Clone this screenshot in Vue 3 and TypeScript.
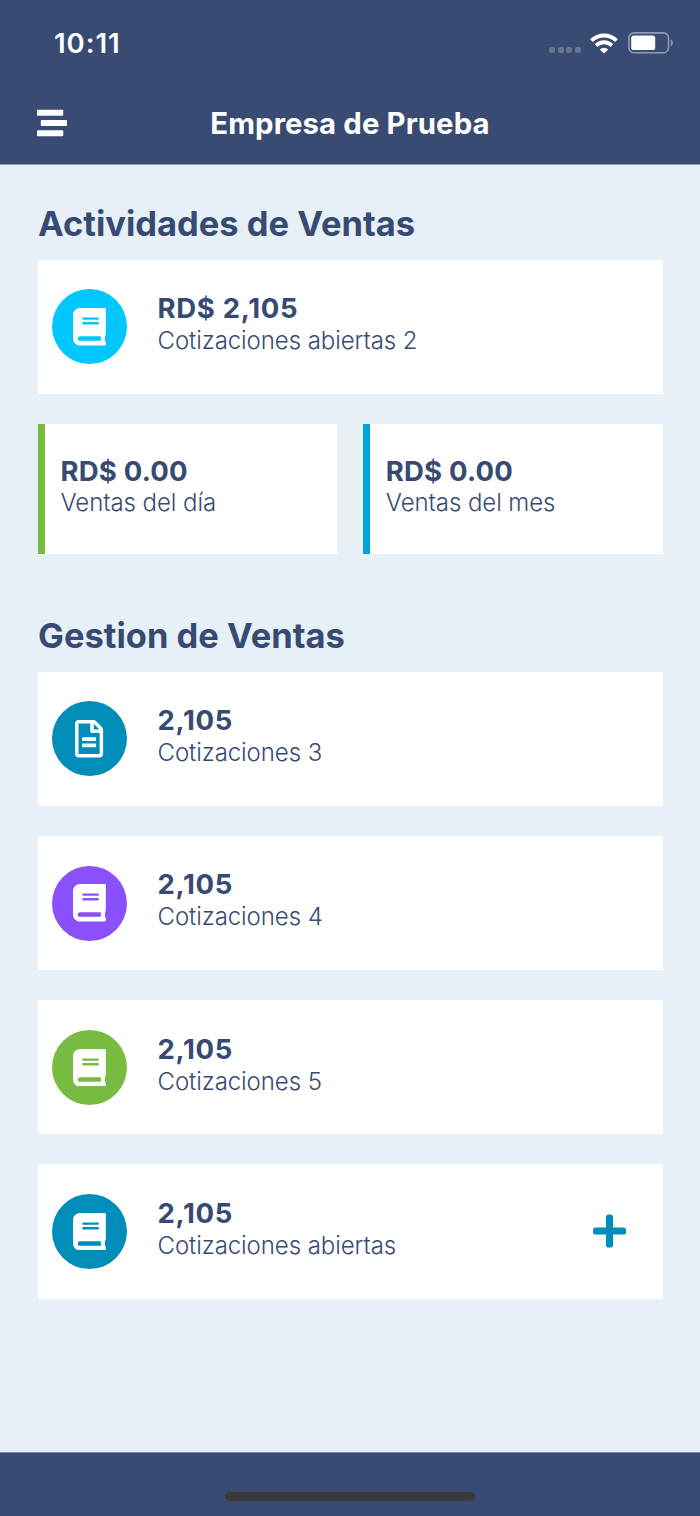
<script setup lang="ts">
type IconName = 'book' | 'file'

interface Entry {
  value: string
  label: string
  icon: IconName
  tone: string
  addable?: boolean
}

interface Stat {
  value: string
  label: string
  tone: string
}

const activities: Entry[] = [
  { value: 'RD$ 2,105', label: 'Cotizaciones abiertas 2', icon: 'book', tone: 'cyan' },
]

const stats: Stat[] = [
  { value: 'RD$ 0.00', label: 'Ventas del día', tone: 'green' },
  { value: 'RD$ 0.00', label: 'Ventas del mes', tone: 'blue' },
]

const management: Entry[] = [
  { value: '2,105', label: 'Cotizaciones 3', icon: 'file', tone: 'teal' },
  { value: '2,105', label: 'Cotizaciones 4', icon: 'book', tone: 'violet' },
  { value: '2,105', label: 'Cotizaciones 5', icon: 'book', tone: 'green' },
  { value: '2,105', label: 'Cotizaciones abiertas', icon: 'book', tone: 'teal', addable: true },
]

const sections = [
  { title: 'Actividades de Ventas', entries: activities, stats },
  { title: 'Gestion de Ventas', entries: management, stats: [] as Stat[] },
]

const icons: Record<IconName, { width: number; path: string }> = {
  book: {
    width: 448,
    path: 'M448 360V16c0-9-7-16-16-16H96C43 0 0 43 0 96v320c0 53 43 96 96 96h336c9 0 16-7 16-16v-24c0-7.500-3.500-14.300-8.900-18.700-4.200-15.400-4.200-59.300 0-74.700 5.400-4.300 8.900-11.100 8.900-18.600zM128 134c0-3.300 2.700-6 6-6h212c3.300 0 6 2.700 6 6v20c0 3.300-2.700 6-6 6H134c-3.300 0-6-2.700-6-6v-20zm0 64c0-3.300 2.700-6 6-6h212c3.300 0 6 2.700 6 6v20c0 3.300-2.700 6-6 6H134c-3.300 0-6-2.700-6-6v-20zm253.400 250H96c-17.700 0-32-14.300-32-32 0-17.600 14.400-32 32-32h285.400c-1.900 17.100-1.900 46.900 0 64z',
  },
  file: {
    width: 384,
    path: 'M288 248v28c0 6.600-5.400 12-12 12H108c-6.600 0-12-5.400-12-12v-28c0-6.600 5.400-12 12-12h168c6.600 0 12 5.400 12 12zm-12 72H108c-6.600 0-12 5.400-12 12v28c0 6.600 5.400 12 12 12h168c6.600 0 12-5.400 12-12v-28c0-6.600-5.400-12-12-12zm108-188.100V464c0 26.500-21.500 48-48 48H48c-26.500 0-48-21.500-48-48V48C0 21.500 21.500 0 48 0h204.100C264.800 0 277 5.100 286 14.100L369.900 98c9 8.900 14.100 21.200 14.100 33.900zm-128-80V128h76.100L256 51.900zM336 464V176H232c-13.300 0-24-10.700-24-24V48H48v416h288z',
  },
}
</script>

<template>
  <div class="screen">
    <header class="top">
      <div class="status">
        <span class="time">10:11</span>
        <div class="indicators">
          <div class="signal"><i v-for="n in 4" :key="n"></i></div>
          <svg class="wifi" width="28" height="21" viewBox="0 0 28 21">
            <g fill="none" stroke="#fff" stroke-width="3.900">
              <path d="M1.500 7.700a17.700 17.700 0 0 1 25 0" />
              <path d="M6.100 12.500a11.200 11.200 0 0 1 15.800 0" />
            </g>
            <path d="M14 20.600l-4.200-4.200a6.200 6.200 0 0 1 8.400 0z" fill="#fff" />
          </svg>
          <svg class="battery" width="45" height="22" viewBox="0 0 45 22">
            <rect x="0.900" y="0.900" width="39.600" height="19.800" rx="5" fill="none" stroke="#919bb1" stroke-width="1.600" />
            <rect x="3.200" y="3.600" width="24" height="14.400" rx="2.600" fill="#fff" />
            <path d="M42.800 7.200c2.700 1.400 2.700 5.800 0 7.200z" fill="#919bb1" />
          </svg>
        </div>
      </div>
      <div class="nav">
        <svg class="menu" width="30" height="30" viewBox="0 0 512 512" fill="#fff">
          <rect x="0" y="30" width="448" height="102" rx="18" />
          <rect x="64" y="205" width="448" height="102" rx="18" />
          <rect x="0" y="380" width="448" height="102" rx="18" />
        </svg>
        <h1>Empresa de Prueba</h1>
      </div>
    </header>

    <main>
      <section v-for="section in sections" :key="section.title">
        <h2>{{ section.title }}</h2>
        <div class="list">
          <article v-for="entry in section.entries" :key="entry.label" class="card">
            <div class="badge" :class="entry.tone">
              <svg
                height="37.500"
                :width="icons[entry.icon].width * 37.5 / 512"
                :viewBox="`0 0 ${icons[entry.icon].width} 512`"
              >
                <path :d="icons[entry.icon].path" fill="#fff" />
              </svg>
            </div>
            <div class="text">
              <strong>{{ entry.value }}</strong>
              <span>{{ entry.label }}</span>
            </div>
            <svg v-if="entry.addable" class="add" width="33" height="38" viewBox="0 0 448 512">
              <path
                d="M416 208H272V64c0-17.670-14.330-32-32-32h-32c-17.670 0-32 14.330-32 32v144H32c-17.670 0-32 14.330-32 32v32c0 17.670 14.330 32 32 32h144v144c0 17.670 14.330 32 32 32h32c17.670 0 32-14.330 32-32V304h144c17.670 0 32-14.330 32-32v-32c0-17.670-14.330-32-32-32z"
                fill="#008db9"
              />
            </svg>
          </article>
        </div>
        <div v-if="section.stats.length" class="stats">
          <article v-for="stat in section.stats" :key="stat.label" class="stat">
            <div class="stripe" :class="stat.tone"></div>
            <div class="text">
              <strong>{{ stat.value }}</strong>
              <span>{{ stat.label }}</span>
            </div>
          </article>
        </div>
      </section>
    </main>

    <footer><div class="home"></div></footer>
  </div>
</template>

<style>
body {
  margin: 0;
}
</style>

<style scoped>
.screen {
  width: 700px;
  height: 1516px;
  box-sizing: border-box;
  display: flex;
  flex-direction: column;
  background: #e7eff7;
  color: #374a72;
  font-family: Inter, 'Liberation Sans', sans-serif;
  overflow: hidden;
}

.top {
  height: 165px;
  box-sizing: border-box;
  flex: none;
  background: #384b72;
  border-bottom: 1px solid #8f9bb2;
  color: #fff;
}

.status {
  height: 86px;
  display: flex;
  align-items: center;
  justify-content: space-between;
  padding: 0 27px 0 54px;
}

.time {
  font-size: 27.500px;
  font-weight: 600;
  line-height: 30px;
  letter-spacing: 0.950px;
}

.indicators {
  display: flex;
  align-items: center;
}

.signal {
  display: flex;
  gap: 2.700px;
  margin-right: 9px;
  padding-top: 14px;
}

.signal i {
  width: 6px;
  height: 6px;
  border-radius: 2px;
  background: #66748f;
}

.wifi {
  margin-right: 10px;
}

.nav {
  height: 76px;
  display: grid;
  grid-template-columns: 30px 1fr 30px;
  align-items: center;
  padding: 0 37px;
}

.menu {
  margin-bottom: 2px;
}

h1 {
  margin: 0;
  font-size: 29.300px;
  font-weight: 700;
  line-height: 36px;
  letter-spacing: 0.130px;
  text-align: center;
  white-space: nowrap;
}

main {
  flex: 1;
  padding: 0 37.500px;
}

h2 {
  margin: 0;
  padding: 35.600px 0 14px 0.500px;
  font-size: 34.500px;
  font-weight: 700;
  line-height: 45px;
  white-space: nowrap;
}

section + section h2 {
  padding-top: 58.900px;
}

.list {
  display: flex;
  flex-direction: column;
  gap: 30.200px;
}

.card {
  height: 134.100px;
  display: flex;
  align-items: flex-start;
  background: #fff;
}

.badge {
  width: 75px;
  height: 75px;
  flex: none;
  margin: 29.700px 30.500px 0 14.500px;
  border-radius: 50%;
  display: flex;
  align-items: center;
  justify-content: center;
}

.text {
  flex: 1;
  display: flex;
  flex-direction: column;
  padding-top: 33.450px;
  white-space: nowrap;
}

.text strong {
  margin-bottom: 2px;
  font-size: 27.500px;
  font-weight: 700;
  line-height: 30px;
  letter-spacing: 0.700px;
}

.text span {
  font-size: 24px;
  font-weight: 300;
  line-height: 32px;
  letter-spacing: -0.070px;
}

.add {
  margin: 47.600px 36.500px 0 0;
}

.stats {
  display: grid;
  grid-template-columns: 1fr 1fr;
  gap: 25.600px;
  margin-top: 30px;
}

.stat {
  height: 130px;
  display: flex;
  background: #fff;
}

.stat .text {
  padding: 31px 0 0 15.500px;
}

.stat .text strong {
  margin-bottom: 0;
  line-height: 32px;
  letter-spacing: 0.200px;
}

.stripe {
  width: 7.500px;
}

.cyan {
  background: #00c8ff;
}

.green {
  background: #77bc40;
}

.blue {
  background: #00a4dc;
}

.teal {
  background: #008db9;
}

.violet {
  background: #8950fc;
}

footer {
  height: 64px;
  box-sizing: border-box;
  flex: none;
  display: flex;
  justify-content: center;
  padding-top: 39px;
  background: #384b72;
  border-top: 1px solid #7a87a2;
}

.home {
  width: 250px;
  height: 9px;
  border-radius: 5px;
  background: #3a3a3a;
}
</style>
